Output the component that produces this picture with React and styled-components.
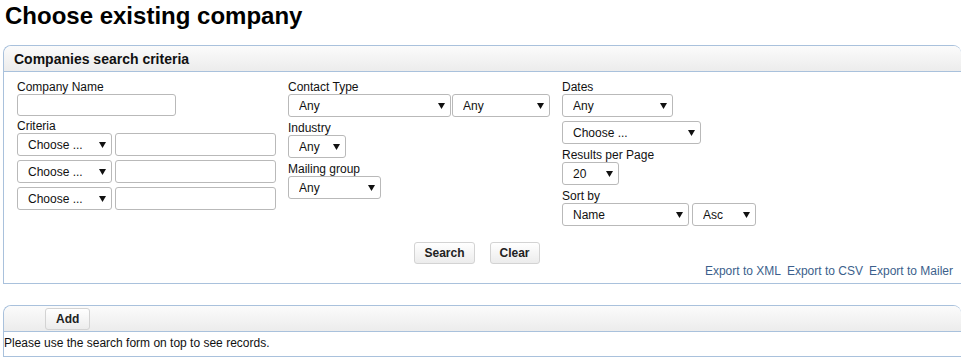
import React from "react";
import styled, { createGlobalStyle } from "styled-components";

const GlobalStyle = createGlobalStyle`
  body {
    margin: 0;
    background: #fff;
    font-family: "Liberation Sans", Arial, sans-serif;
    color: #111;
  }
`;

const Page = styled.div`
  padding: 2px 0 0 3px;
  width: 958px;
`;

const Title = styled.h1`
  margin: 0 0 15px 2px;
  font-size: 24px;
  line-height: 28px;
  font-weight: bold;
  color: #000;
`;

const Panel = styled.section`
  border: 1px solid #a9c1dc;
  border-right: none;
  border-top-left-radius: 8px;
  border-top-right-radius: 8px;
  margin-bottom: ${(p) => p.$gap || 0}px;
`;

const PanelHeader = styled.div`
  height: 25px;
  display: flex;
  align-items: center;
  padding-left: ${(p) => p.$indent || 10}px;
  background: linear-gradient(#fbfbfb, #ececec);
  border-bottom: 1px solid #a9c1dc;
  border-top-left-radius: 8px;
  border-top-right-radius: 8px;
  font-size: 14px;
  font-weight: bold;
  color: #111;
`;

const FormBody = styled.div`
  padding: 8px 0 0 13px;
`;

const Columns = styled.div`
  display: grid;
  grid-template-columns: 271px 274px auto;
`;

const Column = styled.div`
  display: flex;
  flex-direction: column;
  align-items: flex-start;
`;

const Label = styled.label`
  font-size: 12px;
  line-height: 14px;
  display: block;
`;

const Row = styled.div`
  display: flex;
  gap: ${(p) => p.$gap ?? 3}px;
  margin-bottom: 4px;
`;

const TextInput = styled.input`
  box-sizing: border-box;
  width: ${(p) => p.$w}px;
  height: ${(p) => p.$h || 23}px;
  margin: 0 0 ${(p) => p.$mb ?? 4}px 0;
  border: 1px solid #b9b9b9;
  border-radius: 3px;
  padding: 0 4px;
  font-family: inherit;
  font-size: 12px;
`;

const SelectWrap = styled.div`
  position: relative;
  width: ${(p) => p.$w}px;
  height: 23px;
  margin-bottom: ${(p) => p.$mb ?? 4}px;
`;

const SelectBox = styled.select`
  appearance: none;
  -webkit-appearance: none;
  box-sizing: border-box;
  width: 100%;
  height: 100%;
  margin: 0;
  padding: 0 18px 0 10px;
  border: 1px solid #b9b9b9;
  border-radius: 3px;
  background: #fff;
  font-family: "Liberation Sans", Arial, sans-serif;
  font-size: 12px;
  color: #111;
`;

const Arrow = styled.svg`
  position: absolute;
  right: 6px;
  top: 9px;
  pointer-events: none;
`;

const Select = ({ w, value, mb }) => (
  <SelectWrap $w={w} $mb={mb}>
    <SelectBox defaultValue={value}>
      <option>{value}</option>
    </SelectBox>
    <Arrow width="7" height="6" viewBox="0 0 7 6">
      <path d="M0 0H7L3.5 6Z" fill="#111" />
    </Arrow>
  </SelectWrap>
);

const Buttons = styled.div`
  display: flex;
  justify-content: center;
  gap: 15px;
  margin-top: 12px;
  padding-right: 24px;
`;

const Button = styled.button`
  height: 22px;
  padding: 0 ${(p) => p.$px || 9}px;
  border: 1px solid #d3d3d3;
  border-radius: 3px;
  background: linear-gradient(#ffffff, #ececec);
  font-family: "Liberation Sans", Arial, sans-serif;
  font-size: 12px;
  font-weight: bold;
  color: #222;
`;

const Exports = styled.div`
  display: flex;
  justify-content: flex-end;
  gap: 6px;
  padding: 0 8px 5px 0;
  font-size: 12px;
  line-height: 14px;
`;

const ExportLink = styled.a`
  color: #3c5f8c;
  text-decoration: none;
`;

const Message = styled.div`
  font-size: 12px;
  line-height: 14px;
  padding: 4px 0 6px 0;
  color: #111;
`;

const criteriaRows = [0, 1, 2];

export default function App() {
  return (
    <Page>
      <GlobalStyle />
      <Title>Choose existing company</Title>

      <Panel $gap={21}>
        <PanelHeader>Companies search criteria</PanelHeader>
        <FormBody>
          <Columns>
            <Column>
              <Label>Company Name</Label>
              <TextInput $w={159} $h={22} $mb={3} />
              <Label>Criteria</Label>
              {criteriaRows.map((i) => (
                <Row key={i} $gap={3}>
                  <Select w={95} value="Choose ..." mb={0} />
                  <TextInput $w={161} $mb={0} />
                </Row>
              ))}
            </Column>

            <Column>
              <Label>Contact Type</Label>
              <Row $gap={1}>
                <Select w={163} value="Any" mb={0} />
                <Select w={98} value="Any" mb={0} />
              </Row>
              <Label>Industry</Label>
              <Select w={58} value="Any" />
              <Label>Mailing group</Label>
              <Select w={93} value="Any" />
            </Column>

            <Column>
              <Label>Dates</Label>
              <Select w={111} value="Any" />
              <Select w={139} value="Choose ..." />
              <Label>Results per Page</Label>
              <Select w={57} value="20" />
              <Label>Sort by</Label>
              <Row $gap={3}>
                <Select w={127} value="Name" mb={0} />
                <Select w={64} value="Asc" mb={0} />
              </Row>
            </Column>
          </Columns>

          <Buttons>
            <Button>Search</Button>
            <Button>Clear</Button>
          </Buttons>
        </FormBody>
        <Exports>
          <ExportLink href="#">Export to XML</ExportLink>
          <ExportLink href="#">Export to CSV</ExportLink>
          <ExportLink href="#">Export to Mailer</ExportLink>
        </Exports>
      </Panel>

      <Panel>
        <PanelHeader $indent={41}>
          <Button $px={10}>Add</Button>
        </PanelHeader>
        <Message>Please use the search form on top to see records.</Message>
      </Panel>
    </Page>
  );
}
